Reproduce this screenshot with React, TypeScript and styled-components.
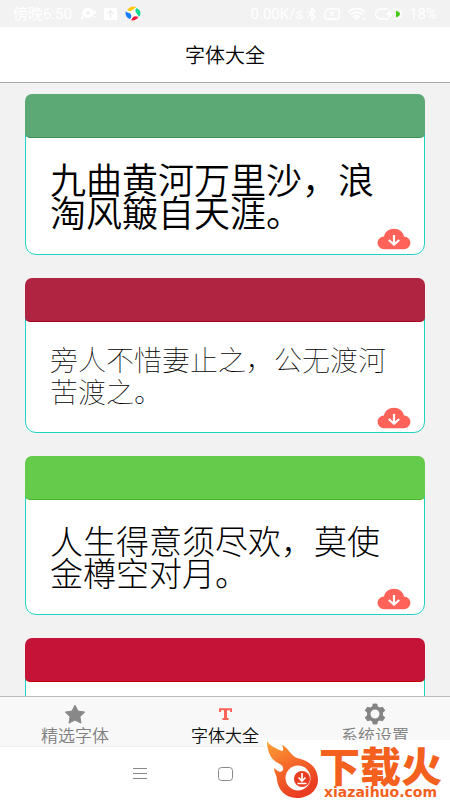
import React from "react";
import styled, { createGlobalStyle } from "styled-components";

const GlobalStyle = createGlobalStyle`
  *, *::before, *::after { box-sizing: border-box; }
  body { margin: 0; background: #f2f2f2; }
  button { border: 0; padding: 0; background: none; font: inherit; color: inherit; cursor: pointer; }
`;

const Screen = styled.div`
  position: relative;
  display: flex;
  flex-direction: column;
  height: 100vh;
  overflow: hidden;
  background: #f2f2f2;
  font-family: "Noto Sans CJK SC", sans-serif;
  color: #111;
`;

const StatusBar = styled.div`
  display: flex;
  flex: none;
  align-items: center;
  justify-content: space-between;
  height: 27px;
  padding: 0 13px;
  color: #fff;
  font-family: Roboto, "Noto Sans CJK SC", sans-serif;
  font-size: 15px;
  line-height: 20px;
`;

const StatusGroup = styled.div<{ $gap: number }>`
  display: flex;
  align-items: center;
  gap: ${({ $gap }) => $gap}px;
`;

const TitleBar = styled.header`
  display: flex;
  flex: none;
  align-items: center;
  justify-content: center;
  height: 56px;
  background: #fff;
  border-bottom: 1px solid #a8a8a8;
`;

const Title = styled.h1`
  margin: 0;
  font-size: 20px;
  font-weight: 350;
  line-height: 28px;
  color: #000;
`;

const FontList = styled.main`
  display: flex;
  flex: 1;
  flex-direction: column;
  gap: 23px;
  min-height: 0;
  padding: 11px 25px;
  overflow-y: auto;
  scrollbar-width: none;
`;

const Card = styled.article`
  display: flex;
  flex: none;
  flex-direction: column;
  background: #fff;
  border: 1px solid #1fd3c0;
  border-radius: 11px;
`;

const Band = styled.div<{ $fill: string; $edge: string }>`
  height: 44px;
  margin: -1px -1px 0;
  background: ${({ $fill }) => $fill};
  border-bottom: 1px solid ${({ $edge }) => $edge};
  border-radius: 7px 7px 5px 5px;
`;

const Sample = styled.p<{ $size: number; $weight: number; $line: number; $top: number }>`
  margin: 0;
  padding: ${({ $top }) => $top}px 24px 0;
  font-size: ${({ $size }) => $size}px;
  font-weight: ${({ $weight }) => $weight};
  line-height: ${({ $line }) => $line}px;
  color: #000;
`;

const DownloadButton = styled.button<{ $bottom: number }>`
  display: flex;
  align-self: flex-end;
  margin: 0 13px ${({ $bottom }) => $bottom}px 0;
`;

const TabBar = styled.nav`
  display: grid;
  flex: none;
  grid-template-columns: repeat(3, 1fr);
  height: 51px;
  background: #f8f8f8;
  border-top: 1px solid #bcbcbc;
  border-bottom: 1px solid #f0f0f0;
`;

const Tab = styled.button<{ $active?: boolean }>`
  display: flex;
  flex-direction: column;
  align-items: center;
  padding-top: 6px;
  font-size: 17px;
  font-weight: 350;
  line-height: 20px;
  color: ${({ $active }) => ($active ? "#111" : "#808080")};
`;

const TabIcon = styled.span`
  display: flex;
  align-items: center;
  justify-content: center;
  height: 22px;
`;

const SystemBar = styled.div`
  display: grid;
  flex: none;
  grid-template-columns: repeat(3, 85px);
  justify-content: center;
  height: 53px;
  background: #fff;
`;

const SystemButton = styled.button`
  display: flex;
  align-items: center;
  justify-content: center;
`;

const Watermark = styled.div`
  position: absolute;
  right: 0;
  bottom: 0;
  display: flex;
  width: 186px;
  height: 60px;
  background: #fff;
  color: #f4611f;
`;

const Brand = styled.div`
  display: flex;
  flex-direction: column;
  align-items: center;
  padding-top: 4px;
`;

const BrandName = styled.strong`
  font-size: 41px;
  font-weight: 900;
  line-height: 41px;
  white-space: nowrap;
`;

const BrandUrl = styled.span`
  font-family: "DejaVu Sans", sans-serif;
  font-size: 14px;
  font-weight: 700;
  line-height: 14px;
`;

const ChatIcon = () => (
  <svg width="16" height="13" viewBox="0 0 16 13" aria-hidden="true">
    <ellipse cx="8" cy="6" rx="6" ry="5" fill="#fff" />
    <circle cx="8" cy="6" r="1.200" fill="#e6e6e6" />
    <circle cx="2" cy="11" r="1.400" fill="#fff" />
    <path d="M15 3v4M15 9v1.400" stroke="#fff" strokeWidth="1.400" />
  </svg>
);

const UploadIcon = () => (
  <svg width="13" height="12" viewBox="0 0 13 12" aria-hidden="true">
    <rect width="13" height="12" rx="1" fill="#fff" />
    <path d="M6.500 10V3M3.500 5.800l3-3 3 3" fill="none" stroke="#ececec" strokeWidth="1.400" />
  </svg>
);

const PinwheelIcon = () => (
  <svg width="16" height="15" viewBox="0 0 16 15" aria-hidden="true">
    <circle cx="8" cy="7.500" r="7" fill="#fff" />
    <path d="M2 4.500C4 .8 8-.2 11.500 1.200 9.300 1.700 7.800 4.800 5.500 5 4.300 5.100 3.300 4.800 2 4.500Z" fill="#ffc715" />
    <path d="M11.200 2.300c3.100.5 4.700 3.500 4.100 6.400-.2 1-.8 1.700-1.600 2.100.1-2-2.100-3-3-4.900-.5-1.200-.3-2.500.5-3.600Z" fill="#08d98d" />
    <path d="M5.300 14.100c2.800 1.100 6.600.1 8.100-3.300-2-.3-3.800-1.100-5.100.1-1.100 1-1.400 2.700-3 3.200Z" fill="#f5183c" />
    <path d="M.8 5.300c-.8 3.200.7 6.700 4.100 7.700 1.500-1 1.900-3.200.9-4.700C4.600 6.700 2.100 7 .8 5.300Z" fill="#147af5" />
  </svg>
);

const BluetoothIcon = () => (
  <svg width="10" height="14" viewBox="0 0 10 14" aria-hidden="true">
    <path d="m1 4 7 6-3.200 3V1L8 4l-7 6" fill="none" stroke="#fff" strokeWidth="1.400" />
  </svg>
);

const NoSimIcon = () => (
  <svg width="16" height="12" viewBox="0 0 16 12" aria-hidden="true">
    <path d="M4 1h10q1 0 1 1v8q0 1-1 1H2q-1 0-1-1V4ZM6 4l4 4M10 4 6 8" fill="none" stroke="#fff" strokeWidth="1.300" />
  </svg>
);

const WifiIcon = () => (
  <svg width="20" height="14" viewBox="0 0 20 14" aria-hidden="true">
    <path d="M1 5q8.500-7 17 0M3.500 7.500q6-5 12 0M6 10q3.500-3 7 0" fill="none" stroke="#fff" strokeWidth="1.700" />
    <path d="m7.500 11 2 2 2-2q-2-1.500-4 0Z" fill="#fff" />
    <path d="M16 10v3M18 10v3" stroke="#fff" />
  </svg>
);

const BatteryIcon = () => (
  <svg width="28" height="12" viewBox="0 0 28 12" aria-hidden="true">
    <path d="M14 1H6.500a5 5 0 0 0 0 10H14M19 1h3.500a5 5 0 0 1 0 10H19" fill="none" stroke="#fff" strokeWidth="1.400" />
    <path d="m17 1-6 6h4l-1 4 6-6h-4Z" fill="#fff" />
    <path d="M22 3h1q3 1 3 3t-3 3h-1Z" fill="#45cb12" />
  </svg>
);

const CloudDownloadIcon = () => (
  <svg width="34" height="22" viewBox="0 0 34 22" aria-hidden="true">
    <path d="M7 21.200C3.400 21.200.6 18.400.6 14.800S3.400 8.600 7 8.400C8 3.700 12 .7 17 .7s9 3 10 7.700c3.600.2 6.400 2.800 6.400 6.400s-2.800 6.400-6.400 6.400Z" fill="#ff6259" />
    <path d="M17 7v9M11.800 12l5.200 4.700 5.200-4.700" fill="none" stroke="#fff" strokeWidth="2.200" strokeLinejoin="round" />
  </svg>
);

const StarIcon = () => (
  <svg width="22" height="20" viewBox="0 0 22 20" aria-hidden="true">
    <path d="m11 1.200 3 5.900 6.700 1-4.800 4.600 1.100 6.400-6-3-6 3 1.100-6.400L1.300 8.100l6.700-1Z" fill="#888" stroke="#888" strokeWidth="1" strokeLinejoin="round" />
  </svg>
);

const TypeIcon = () => (
  <svg width="13" height="12" viewBox="0 0 13 12" aria-hidden="true">
    <path d="M1 4V1.200h11V4M3.500 11h6" fill="none" stroke="#ff6259" strokeWidth="2" />
    <path d="M5 1h3v10H5Z" fill="#ff6259" />
  </svg>
);

const GearIcon = () => (
  <svg width="24" height="22" viewBox="0 0 24 22" aria-hidden="true">
    <path
      fillRule="evenodd"
      d="M9.800.8q2.200-.8 4.400 0l.7 2.700 1.800 1 2.900-.7 2.700 3.800-2.300 2v2.800l2.300 2-2.700 3.800-2.900-.7-1.800 1-.7 2.700q-2.200.8-4.400 0l-.7-2.700-1.800-1-2.900.7-2.700-3.800 2.300-2V9.600l-2.300-2 2.700-3.800 2.900.7 1.800-1ZM12 6.500a4.500 4.500 0 1 0 0 9 4.500 4.500 0 0 0 0-9Z"
      fill="#848484"
    />
  </svg>
);

const MenuIcon = () => (
  <svg width="14" height="13" viewBox="0 0 14 13" aria-hidden="true">
    <path d="M0 1.500h14M0 6.500h14M0 11.500h14" stroke="#888" />
  </svg>
);

const HomeIcon = () => (
  <svg width="15" height="14" viewBox="0 0 15 14" aria-hidden="true">
    <rect x=".5" y=".5" width="14" height="13" rx="3" fill="none" stroke="#888" />
  </svg>
);

const FlameLogo = () => (
  <svg width="55" height="60" viewBox="0 0 55 60" aria-hidden="true">
    <defs>
      <linearGradient id="flame" x1="0" y1="0" x2=".5" y2="1">
        <stop offset="0" stopColor="#fba335" />
        <stop offset=".5" stopColor="#f56a2a" />
        <stop offset="1" stopColor="#ea3c20" />
      </linearGradient>
    </defs>
    <path
      d="M3 1c3 5 8 7 15 10 2-1 1-3 0-6 6 2 8 10 15 13 11 2 21 9 21 22 0 10-9 18-21 18-12 0-19-9-20-18 0-5-3-7-3-12 4 4 7 5 9 2 1-3-1-5-5-7C6 19 3 10 3 1Z"
      fill="url(#flame)"
    />
    <circle cx="34" cy="38" r="12.500" fill="#fff" />
    <circle cx="38" cy="39" r="8" fill="#ea3c20" />
    <path d="M38 33v7M34.500 37.500l3.500 3.500 3.500-3.500M33.500 43.500h9" fill="none" stroke="#fff" strokeWidth="1.700" />
  </svg>
);

interface FontEntry {
  text: string;
  fill: string;
  edge: string;
  size: number;
  weight: number;
  line: number;
  top: number;
  bottom: number;
}

const fonts: FontEntry[] = [
  { text: "九曲黄河万里沙，浪淘风簸自天涯。", fill: "#5da975", edge: "#3d9458", size: 36, weight: 350, line: 33, top: 24, bottom: 4 },
  { text: "旁人不惜妻止之，公无渡河苦渡之。", fill: "#b02442", edge: "#a90022", size: 28, weight: 100, line: 32, top: 21, bottom: 3 },
  { text: "人生得意须尽欢，莫使金樽空对月。", fill: "#65cb4a", edge: "#4cb42a", size: 33, weight: 300, line: 32, top: 24, bottom: 4 },
  { text: "", fill: "#c41337", edge: "#c70000", size: 28, weight: 400, line: 32, top: 24, bottom: 4 },
];

export default function App() {
  return (
    <>
      <GlobalStyle />
      <Screen>
        <StatusBar>
          <StatusGroup $gap={8}>
            <span>傍晚6:50</span>
            <ChatIcon />
            <UploadIcon />
            <PinwheelIcon />
          </StatusGroup>
          <StatusGroup $gap={7}>
            <StatusGroup $gap={4}>
              <span>0.00K/s</span>
              <BluetoothIcon />
            </StatusGroup>
            <NoSimIcon />
            <WifiIcon />
            <BatteryIcon />
            <span>18%</span>
          </StatusGroup>
        </StatusBar>
        <TitleBar>
          <Title>字体大全</Title>
        </TitleBar>
        <FontList>
          {fonts.map((font) => (
            <Card key={font.fill}>
              <Band $fill={font.fill} $edge={font.edge} />
              <Sample $size={font.size} $weight={font.weight} $line={font.line} $top={font.top}>
                {font.text}
              </Sample>
              <DownloadButton $bottom={font.bottom} aria-label="下载">
                <CloudDownloadIcon />
              </DownloadButton>
            </Card>
          ))}
        </FontList>
        <TabBar>
          <Tab>
            <TabIcon><StarIcon /></TabIcon>
            精选字体
          </Tab>
          <Tab $active aria-current="page">
            <TabIcon><TypeIcon /></TabIcon>
            字体大全
          </Tab>
          <Tab>
            <TabIcon><GearIcon /></TabIcon>
            系统设置
          </Tab>
        </TabBar>
        <SystemBar>
          <SystemButton aria-label="菜单"><MenuIcon /></SystemButton>
          <SystemButton aria-label="主屏幕"><HomeIcon /></SystemButton>
        </SystemBar>
        <Watermark>
          <FlameLogo />
          <Brand>
            <BrandName>下载火</BrandName>
            <BrandUrl>xiazaihuo.com</BrandUrl>
          </Brand>
        </Watermark>
      </Screen>
    </>
  );
}
